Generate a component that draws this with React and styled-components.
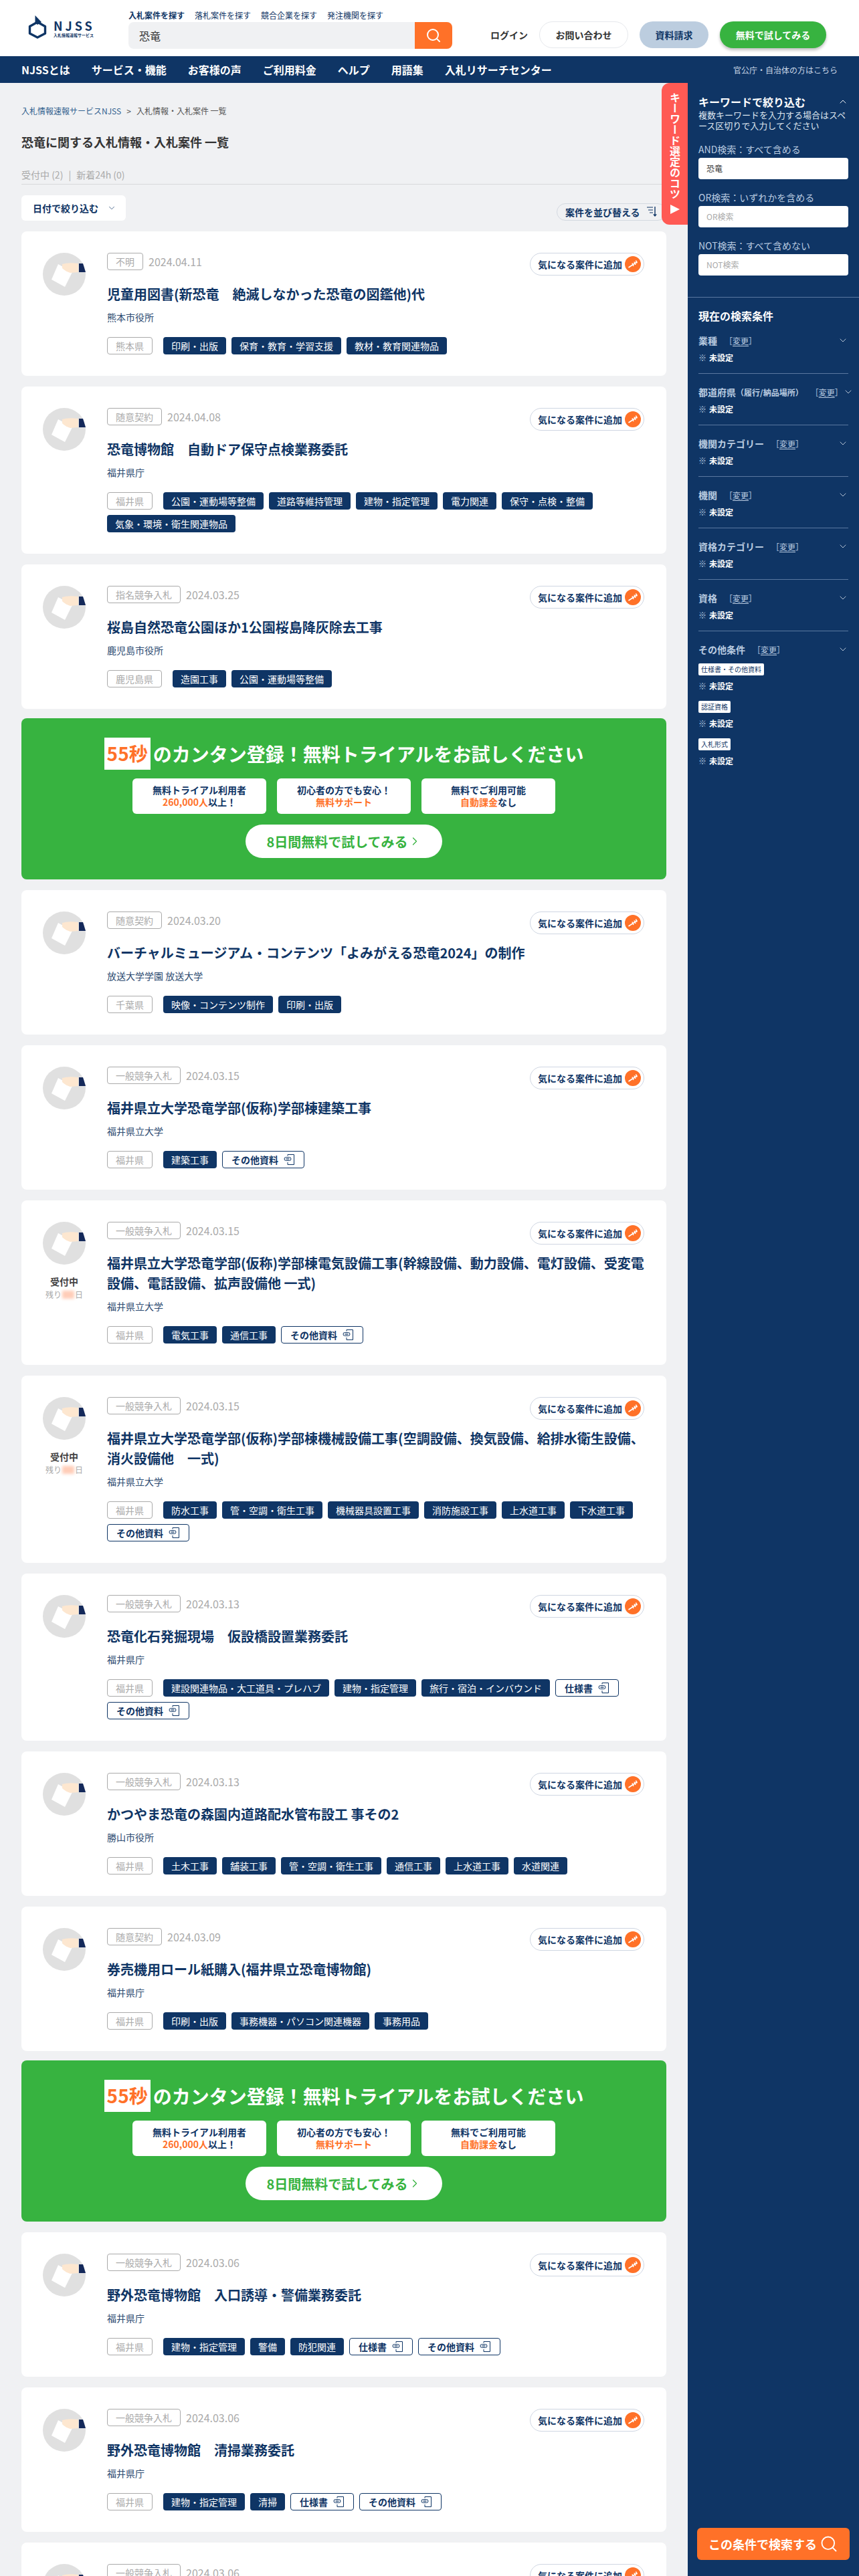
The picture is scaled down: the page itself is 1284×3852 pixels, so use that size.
import React from "react";
import styled, { createGlobalStyle } from "styled-components";
import { ChevronDown, ChevronUp, ChevronRight, Search } from "lucide-react";

const NAVY = "#0f3565";
const ORANGE = "#ff7128";
const GREEN = "#37b340";

const GlobalStyle = createGlobalStyle`
	html, body {
		margin: 0;
		padding: 0;
		background: #f0f1f3;
	}
	body {
		font-family: "Noto Sans CJK JP", "Noto Sans", sans-serif;
		color: #333;
	}
	* {
		box-sizing: border-box;
	}
`;

const Page = styled.div`
	width: 1284px;
	height: 3852px;
	overflow: hidden;
	display: flex;
	flex-direction: column;
`;

/* ヘッダー */
const Header = styled.header`
	height: 84px;
	flex: none;
	background: #fff;
	display: flex;
	align-items: flex-start;
	padding-left: 42px;
`;

const LogoWrap = styled.div`
	width: 150px;
	padding-top: 22px;
	display: flex;
	gap: 10px;
`;

const LogoText = styled.div`
	display: flex;
	flex-direction: column;
	color: ${NAVY};
	padding-top: 7px;
`;

const LogoName = styled.span`
	font-size: 18px;
	line-height: 18px;
	font-weight: 700;
	letter-spacing: 4px;
`;

const LogoSub = styled.span`
	font-size: 6px;
	line-height: 10px;
	font-weight: 700;
	white-space: nowrap;
	margin-top: 1px;
`;

const SearchBlock = styled.div`
	width: 484px;
	padding-top: 12px;
`;

const SearchTabs = styled.div`
	display: flex;
	gap: 15px;
	height: 21px;
	align-items: center;
`;

const SearchTab = styled.span`
	font-size: 12px;
	line-height: 18px;
	color: ${NAVY};
	font-weight: ${(props) => (props.$active ? 700 : 400)};
`;

const SearchBox = styled.div`
	height: 40px;
	background: #f0f1f3;
	border-radius: 8px;
	display: flex;
	justify-content: space-between;
	overflow: hidden;
`;

const SearchValue = styled.span`
	font-size: 16px;
	line-height: 40px;
	padding-left: 16px;
	color: #333;
`;

const SearchButton = styled.span`
	width: 56px;
	background: ${ORANGE};
	color: #fff;
	display: flex;
	align-items: center;
	justify-content: center;
`;

const HeaderActions = styled.div`
	margin-left: 57px;
	padding-top: 32px;
	display: flex;
	align-items: center;
	gap: 17px;
`;

const LoginLink = styled.span`
	font-size: 14px;
	font-weight: 700;
	color: #333;
`;

const PillButton = styled.span`
	height: 40px;
	width: ${(props) => props.$width}px;
	border-radius: 20px;
	font-size: 14px;
	font-weight: 700;
	display: flex;
	align-items: center;
	justify-content: center;
	color: ${(props) => props.$color};
	background: ${(props) => props.$bg};
	border: ${(props) => (props.$outline ? "1px solid #e6e8ec" : "none")};
	box-shadow: ${(props) => (props.$raised ? "0 3px 4px rgba(0, 0, 0, 0.25)" : "none")};
`;

/* グローバルナビ */
const Nav = styled.nav`
	height: 40px;
	flex: none;
	background: ${NAVY};
	display: flex;
	align-items: center;
	justify-content: space-between;
	padding: 0 32px;
`;

const NavList = styled.div`
	display: flex;
	gap: 32px;
`;

const NavItem = styled.span`
	font-size: 16px;
	font-weight: 700;
	color: #fff;
`;

const NavRight = styled.span`
	font-size: 12px;
	color: #c9d6e6;
`;

/* 本体 */
const Body = styled.div`
	flex: 1;
	min-height: 0;
	position: relative;
	display: flex;
`;

const Main = styled.main`
	width: 1028px;
	flex: none;
	padding: 32px 32px 0;
	overflow: hidden;
`;

const Breadcrumb = styled.div`
	font-size: 12px;
	line-height: 20px;
	color: #555;
	display: flex;
	gap: 8px;
`;

const CrumbLink = styled.span`
	color: #33628f;
`;

const PageTitle = styled.h1`
	margin: 22px 0 0;
	font-size: 18px;
	line-height: 28px;
	font-weight: 700;
	color: #333;
`;

const Counts = styled.div`
	margin-top: 23px;
	height: 27px;
	font-size: 14px;
	line-height: 24px;
	color: #aaa;
	border-bottom: 1px solid #d8d9db;
	width: 958px;
	display: flex;
	gap: 8px;
`;

const Toolbar = styled.div`
	margin-top: 16px;
	display: flex;
	justify-content: space-between;
	align-items: flex-end;
	height: 38px;
`;

const FilterButton = styled.div`
	width: 156px;
	height: 38px;
	background: #fff;
	border-radius: 6px;
	padding: 0 14px 0 17px;
	font-size: 14px;
	font-weight: 700;
	color: ${NAVY};
	display: flex;
	align-items: center;
	justify-content: space-between;
`;

const SortButton = styled.div`
	width: 164px;
	height: 26px;
	border: 1px solid #d4d9e0;
	border-radius: 13px;
	padding-left: 12px;
	font-size: 14px;
	font-weight: 700;
	color: ${NAVY};
	display: flex;
	align-items: center;
	gap: 10px;
`;

const Stack = styled.div`
	margin-top: 16px;
	display: flex;
	flex-direction: column;
	gap: 16px;
`;

const Card = styled.article`
	background: #fff;
	border-radius: 8px;
	padding: 32px;
	display: flex;
	gap: 32px;
`;

const Side = styled.div`
	width: 64px;
	flex: none;
	display: flex;
	flex-direction: column;
	align-items: center;
`;

const OpenLabel = styled.span`
	margin-top: 15px;
	font-size: 14px;
	line-height: 20px;
	font-weight: 700;
	color: #444;
	white-space: nowrap;
`;

const Remain = styled.span`
	font-size: 12px;
	line-height: 20px;
	color: #aaa;
	white-space: nowrap;
	display: flex;
	align-items: center;
`;

const BlurDays = styled.i`
	width: 18px;
	height: 12px;
	margin: 0 1px;
	background: #ffcdb8;
	filter: blur(2px);
`;

const CardBody = styled.div`
	flex: 1;
	min-width: 0;
`;

const TopRow = styled.div`
	display: flex;
	align-items: flex-start;
	justify-content: space-between;
	height: 34px;
	margin-right: 1px;
`;

const MetaRow = styled.div`
	display: flex;
	align-items: center;
	gap: 8px;
`;

const OutlineTag = styled.span`
	height: 26px;
	padding: 0 12px;
	border: 1px solid #aaa;
	border-radius: 4px;
	font-size: 14px;
	line-height: 24px;
	color: #aaa;
	white-space: nowrap;
`;

const DateText = styled.span`
	font-size: 16px;
	color: #aaa;
`;

const AddButton = styled.span`
	width: 171px;
	height: 34px;
	border: 1px solid #cfd6e2;
	border-radius: 17px;
	padding: 0 4px 0 11px;
	font-size: 14px;
	font-weight: 700;
	color: ${NAVY};
	display: flex;
	align-items: center;
	justify-content: space-between;
	white-space: nowrap;
`;

const CardTitle = styled.h2`
	margin: 13px 0 0;
	font-size: 20px;
	line-height: 30px;
	font-weight: 700;
	color: ${NAVY};
`;

const Org = styled.p`
	margin: 9px 0 0;
	font-size: 14px;
	line-height: 20px;
	color: #2c4a70;
`;

const Tags = styled.div`
	margin-top: 20px;
	display: flex;
	flex-wrap: wrap;
	gap: 8px;
`;

const PrefTag = styled(OutlineTag)`
	margin-right: 8px;
`;

const SolidTag = styled.span`
	height: 26px;
	padding: 0 12px;
	background: ${NAVY};
	border-radius: 4px;
	font-size: 14px;
	line-height: 26px;
	color: #fff;
	white-space: nowrap;
`;

const DocTag = styled.span`
	height: 26px;
	padding: 0 12px 0 13px;
	background: #fff;
	border: 1px solid ${NAVY};
	border-radius: 4px;
	font-size: 14px;
	font-weight: 700;
	color: ${NAVY};
	white-space: nowrap;
	display: flex;
	align-items: center;
	gap: 8px;
`;

/* キャンペーン枠 */
const Promo = styled.section`
	height: 241px;
	margin-top: -2px;
	background: ${GREEN};
	border-radius: 8px;
	padding-top: 29px;
	display: flex;
	flex-direction: column;
	align-items: center;
`;

const PromoTitle = styled.div`
	height: 48px;
	display: flex;
	align-items: center;
	gap: 4px;
	font-size: 28px;
	font-weight: 700;
	color: #fff;
	white-space: nowrap;
`;

const PromoSeconds = styled.span`
	height: 48px;
	padding: 0 4px;
	background: #fff;
	color: ${ORANGE};
	line-height: 46px;
`;

const PromoBoxes = styled.div`
	margin-top: 13px;
	display: flex;
	gap: 16px;
`;

const PromoBox = styled.div`
	width: 200px;
	height: 53px;
	padding-top: 8px;
	background: #fff;
	border-radius: 6px;
	font-size: 14px;
	line-height: 18px;
	font-weight: 700;
	color: ${NAVY};
	text-align: center;
`;

const Accent = styled.span`
	color: ${ORANGE};
`;

const PromoButton = styled.div`
	margin-top: 16px;
	width: 294px;
	height: 50px;
	background: #fff;
	border-radius: 25px;
	font-size: 20px;
	font-weight: 700;
	color: ${GREEN};
	display: flex;
	align-items: center;
	justify-content: center;
`;

/* サイドバー */
const Sidebar = styled.aside`
	width: 256px;
	flex: none;
	background: ${NAVY};
	display: flex;
	flex-direction: column;
`;

const KeywordPanel = styled.div`
	padding: 18px 16px 32px;
	border-bottom: 1px solid #5a78a0;
`;

const PanelHead = styled.div`
	display: flex;
	justify-content: space-between;
	align-items: center;
	font-size: 16px;
	line-height: 20px;
	font-weight: 700;
	color: #fff;
`;

const PanelNote = styled.p`
	margin: 2px 0 0;
	font-size: 13px;
	line-height: 16px;
	color: #dfe7f0;
`;

const FieldLabel = styled.label`
	display: block;
	margin-top: 17px;
	font-size: 14px;
	line-height: 20px;
	color: #b9cbe0;
`;

const FieldBox = styled.div`
	margin-top: 3px;
	height: 32px;
	background: #fff;
	border-radius: 4px;
	padding-left: 12px;
	font-size: 12px;
	line-height: 32px;
	color: ${(props) => (props.$empty ? "#aaa" : "#333")};
`;

const Conditions = styled.div`
	padding: 17px 16px 0;
`;

const ConditionsTitle = styled.div`
	font-size: 16px;
	line-height: 20px;
	font-weight: 700;
	color: #fff;
	margin-bottom: 17px;
`;

const CondItem = styled.div`
	padding-bottom: 13px;
	margin-bottom: 17px;
	border-bottom: 1px solid #5a78a0;
`;

const CondHead = styled.div`
	height: 20px;
	display: flex;
	align-items: center;
	font-size: 14px;
	font-weight: 700;
	color: #b9cbe0;
	white-space: nowrap;
`;

const CondSmall = styled.span`
	font-size: 12px;
`;

const ChangeLink = styled.span`
	margin-left: 11px;
	font-size: 12px;
	font-weight: 400;
	color: #b9cbe0;
	u {
		text-underline-offset: 2px;
	}
`;

const CondChevron = styled.span`
	margin-left: auto;
	display: flex;
	color: #dfe7f0;
`;

const CondValue = styled.div`
	margin-top: 6px;
	font-size: 12px;
	line-height: 20px;
	font-weight: 700;
	color: #fff;
	display: flex;
	gap: 4px;
`;

const CondMark = styled.span`
	color: #b9cbe0;
	font-weight: 400;
`;

const SubLabel = styled.span`
	display: table;
	margin-top: ${(props) => props.$top}px;
	height: 18px;
	padding: 0 4px;
	background: #fff;
	border-radius: 2px;
	font-size: 10px;
	line-height: 18px;
	color: ${NAVY};
`;

const SubmitButton = styled.div`
	margin: auto 14px 24px;
	height: 48px;
	background: ${ORANGE};
	border-radius: 6px;
	font-size: 18px;
	font-weight: 700;
	color: #fff;
	display: flex;
	align-items: center;
	justify-content: center;
	gap: 4px;
`;

const TipsTab = styled.div`
	position: absolute;
	top: 0;
	left: 989px;
	width: 39px;
	height: 212px;
	padding: 14px 0 0;
	background: #ff5a54;
	border-radius: 12px 0 0 12px;
	writing-mode: vertical-rl;
	display: flex;
	align-items: center;
	font-size: 16px;
	line-height: 39px;
	font-weight: 700;
	color: #fff;
	white-space: nowrap;
`;

const TipsArrow = styled.svg`
	margin-top: 8px;
`;

const cards = [
	{ kind: "不明", date: "2024.04.11", title: "児童用図書(新恐竜　絶滅しなかった恐竜の図鑑他)代", org: "熊本市役所", pref: "熊本県", tags: ["印刷・出版", "保育・教育・学習支援", "教材・教育関連物品"] },
	{ kind: "随意契約", date: "2024.04.08", title: "恐竜博物館　自動ドア保守点検業務委託", org: "福井県庁", pref: "福井県", tags: ["公園・運動場等整備", "道路等維持管理", "建物・指定管理", "電力関連", "保守・点検・整備", "気象・環境・衛生関連物品"] },
	{ kind: "指名競争入札", date: "2024.03.25", title: "桜島自然恐竜公園ほか1公園桜島降灰除去工事", org: "鹿児島市役所", pref: "鹿児島県", tags: ["造園工事", "公園・運動場等整備"] },
	"promo",
	{ kind: "随意契約", date: "2024.03.20", title: "バーチャルミュージアム・コンテンツ「よみがえる恐竜2024」の制作", org: "放送大学学園 放送大学", pref: "千葉県", tags: ["映像・コンテンツ制作", "印刷・出版"] },
	{ kind: "一般競争入札", date: "2024.03.15", title: "福井県立大学恐竜学部(仮称)学部棟建築工事", org: "福井県立大学", pref: "福井県", tags: ["建築工事"], docs: ["その他資料"] },
	{ kind: "一般競争入札", date: "2024.03.15", open: true, title: "福井県立大学恐竜学部(仮称)学部棟電気設備工事(幹線設備、動力設備、電灯設備、受変電設備、電話設備、拡声設備他 一式)", org: "福井県立大学", pref: "福井県", tags: ["電気工事", "通信工事"], docs: ["その他資料"] },
	{ kind: "一般競争入札", date: "2024.03.15", open: true, title: "福井県立大学恐竜学部(仮称)学部棟機械設備工事(空調設備、換気設備、給排水衛生設備、消火設備他　一式)", org: "福井県立大学", pref: "福井県", tags: ["防水工事", "管・空調・衛生工事", "機械器具設置工事", "消防施設工事", "上水道工事", "下水道工事"], docs: ["その他資料"] },
	{ kind: "一般競争入札", date: "2024.03.13", title: "恐竜化石発掘現場　仮設橋設置業務委託", org: "福井県庁", pref: "福井県", tags: ["建設関連物品・大工道具・プレハブ", "建物・指定管理", "旅行・宿泊・インバウンド"], docs: ["仕様書", "その他資料"] },
	{ kind: "一般競争入札", date: "2024.03.13", title: "かつやま恐竜の森園内道路配水管布設工 事その2", org: "勝山市役所", pref: "福井県", tags: ["土木工事", "舗装工事", "管・空調・衛生工事", "通信工事", "上水道工事", "水道関連"] },
	{ kind: "随意契約", date: "2024.03.09", title: "券売機用ロール紙購入(福井県立恐竜博物館)", org: "福井県庁", pref: "福井県", tags: ["印刷・出版", "事務機器・パソコン関連機器", "事務用品"] },
	"promo",
	{ kind: "一般競争入札", date: "2024.03.06", title: "野外恐竜博物館　入口誘導・警備業務委託", org: "福井県庁", pref: "福井県", tags: ["建物・指定管理", "警備", "防犯関連"], docs: ["仕様書", "その他資料"] },
	{ kind: "一般競争入札", date: "2024.03.06", title: "野外恐竜博物館　清掃業務委託", org: "福井県庁", pref: "福井県", tags: ["建物・指定管理", "清掃"], docs: ["仕様書", "その他資料"] },
	{ kind: "一般競争入札", date: "2024.03.06", title: "野外恐竜博物館", org: "福井県庁", pref: "福井県", tags: ["建物・指定管理"] },
];

const conditions = [
	{ label: "業種" },
	{ label: "都道府県", small: "（履行/納品場所）" },
	{ label: "機関カテゴリー" },
	{ label: "機関" },
	{ label: "資格カテゴリー" },
	{ label: "資格" },
];

function Logo() {
	return (
		<svg width="28" height="36" viewBox="0 0 28 36">
			<path d="M14 11 L25.5 17.5 V28 L14 34 L2.5 28 V17.5 Z" fill="none" stroke={NAVY} strokeWidth="3.4" strokeLinejoin="round" />
			<path d="M10.5 1 L20 11 L14 15 L10.5 12 Z" fill={NAVY} />
		</svg>
	);
}

function BidIllustration() {
	return (
		<svg width="64" height="64" viewBox="0 0 64 64">
			<circle cx="32" cy="32" r="32" fill="#e0e0e0" />
			<polygon points="23,17 44,29 33,51 13,40" fill="#fff" />
			<path d="M29 17 Q38 14 53 16 V29 L41 30 Q34 28 29 23 Z" fill="#fde7d0" />
			<path d="M54 16 H60 L64 29 H54 Z" fill="#14295a" />
		</svg>
	);
}

function PinIcon() {
	return (
		<svg width="24" height="24" viewBox="0 0 24 24">
			<circle cx="12" cy="12" r="12" fill={ORANGE} />
			<path d="M5.5 17 L18.5 8.5" stroke="#fff" strokeWidth="1.6" />
			<path d="M11 10.5 L13 15 M14 8.5 L16 13 M16.5 6.5 L18 10.5" stroke="#fff" strokeWidth="1.6" />
		</svg>
	);
}

function DocIcon() {
	return (
		<svg width="18" height="18" viewBox="0 0 18 18" fill="none" stroke={NAVY} strokeWidth="1">
			<path d="M6 3.5 V1.5 H15.5 V16.5 H6 V13" />
			<rect x="1" y="5.5" width="10" height="5" rx="2.5" fill="#fff" />
			<path d="M3.5 8 H8.5" strokeWidth="1.4" />
		</svg>
	);
}

function SortIcon() {
	return (
		<svg width="16" height="18" viewBox="0 0 16 18" fill="none" stroke={NAVY} strokeWidth="1">
			<path d="M0 2 H9 M2 6 H9 M4 10 H9" />
			<path d="M12 1 V15" strokeWidth="1.4" />
			<path d="M9 12.5 L12 16 L15 12.5 Z" fill={NAVY} stroke="none" />
		</svg>
	);
}

function BidCard({ item }) {
	return (
		<Card>
			<Side>
				<BidIllustration />
				{item.open && (
					<>
						<OpenLabel>受付中</OpenLabel>
						<Remain>
							残り<BlurDays />日
						</Remain>
					</>
				)}
			</Side>
			<CardBody>
				<TopRow>
					<MetaRow>
						<OutlineTag>{item.kind}</OutlineTag>
						<DateText>{item.date}</DateText>
					</MetaRow>
					<AddButton>
						気になる案件に追加
						<PinIcon />
					</AddButton>
				</TopRow>
				<CardTitle>{item.title}</CardTitle>
				<Org>{item.org}</Org>
				<Tags>
					<PrefTag>{item.pref}</PrefTag>
					{item.tags.map((tag) => (
						<SolidTag key={tag}>{tag}</SolidTag>
					))}
					{(item.docs || []).map((doc) => (
						<DocTag key={doc}>
							{doc}
							<DocIcon />
						</DocTag>
					))}
				</Tags>
			</CardBody>
		</Card>
	);
}

function TrialPromo() {
	return (
		<Promo>
			<PromoTitle>
				<PromoSeconds>55秒</PromoSeconds>
				のカンタン登録！無料トライアルをお試しください
			</PromoTitle>
			<PromoBoxes>
				<PromoBox>
					無料トライアル利用者
					<br />
					<Accent>260,000人</Accent>以上！
				</PromoBox>
				<PromoBox>
					初心者の方でも安心！
					<br />
					<Accent>無料サポート</Accent>
				</PromoBox>
				<PromoBox>
					無料でご利用可能
					<br />
					<Accent>自動課金</Accent>なし
				</PromoBox>
			</PromoBoxes>
			<PromoButton>
				8日間無料で試してみる
				<ChevronRight size={20} strokeWidth={1.5} />
			</PromoButton>
		</Promo>
	);
}

function Condition({ item }) {
	return (
		<CondItem>
			<CondHead>
				{item.label}
				{item.small && <CondSmall>{item.small}</CondSmall>}
				<ChangeLink>
					［<u>変更</u>］
				</ChangeLink>
				<CondChevron>
					<ChevronDown size={16} strokeWidth={1.2} />
				</CondChevron>
			</CondHead>
			<CondValue>
				<CondMark>※</CondMark>未設定
			</CondValue>
		</CondItem>
	);
}

function SubCondition({ label, top }) {
	return (
		<>
			<SubLabel $top={top}>{label}</SubLabel>
			<CondValue>
				<CondMark>※</CondMark>未設定
			</CondValue>
		</>
	);
}

export default function App() {
	return (
		<Page>
			<GlobalStyle />
			<Header>
				<LogoWrap>
					<Logo />
					<LogoText>
						<LogoName>NJSS</LogoName>
						<LogoSub>入札情報速報サービス</LogoSub>
					</LogoText>
				</LogoWrap>
				<SearchBlock>
					<SearchTabs>
						<SearchTab $active>入札案件を探す</SearchTab>
						<SearchTab>落札案件を探す</SearchTab>
						<SearchTab>競合企業を探す</SearchTab>
						<SearchTab>発注機関を探す</SearchTab>
					</SearchTabs>
					<SearchBox>
						<SearchValue>恐竜</SearchValue>
						<SearchButton>
							<Search size={24} strokeWidth={2} />
						</SearchButton>
					</SearchBox>
				</SearchBlock>
				<HeaderActions>
					<LoginLink>ログイン</LoginLink>
					<PillButton $width={133} $color="#333" $bg="#fff" $outline>
						お問い合わせ
					</PillButton>
					<PillButton $width={103} $color={NAVY} $bg="#bccddf">
						資料請求
					</PillButton>
					<PillButton $width={159} $color="#fff" $bg={GREEN} $raised>
						無料で試してみる
					</PillButton>
				</HeaderActions>
			</Header>
			<Nav>
				<NavList>
					<NavItem>NJSSとは</NavItem>
					<NavItem>サービス・機能</NavItem>
					<NavItem>お客様の声</NavItem>
					<NavItem>ご利用料金</NavItem>
					<NavItem>ヘルプ</NavItem>
					<NavItem>用語集</NavItem>
					<NavItem>入札リサーチセンター</NavItem>
				</NavList>
				<NavRight>官公庁・自治体の方はこちら</NavRight>
			</Nav>
			<Body>
				<Main>
					<Breadcrumb>
						<CrumbLink>入札情報速報サービスNJSS</CrumbLink>
						<span>&gt;</span>
						<span>入札情報・入札案件 一覧</span>
					</Breadcrumb>
					<PageTitle>恐竜に関する入札情報・入札案件 一覧</PageTitle>
					<Counts>
						<span>受付中 (2)</span>
						<span>|</span>
						<span>新着24h (0)</span>
					</Counts>
					<Toolbar>
						<FilterButton>
							日付で絞り込む
							<ChevronDown size={14} strokeWidth={1.2} />
						</FilterButton>
						<SortButton>
							案件を並び替える
							<SortIcon />
						</SortButton>
					</Toolbar>
					<Stack>
						{cards.map((item, index) => (item === "promo" ? <TrialPromo key={index} /> : <BidCard key={index} item={item} />))}
					</Stack>
				</Main>
				<TipsTab>
					キーワード選定のコツ
					<TipsArrow width="14" height="14" viewBox="0 0 14 14">
						<polygon points="0,0 14,7 0,14" fill="#fff" />
					</TipsArrow>
				</TipsTab>
				<Sidebar>
					<KeywordPanel>
						<PanelHead>
							キーワードで絞り込む
							<ChevronUp size={16} strokeWidth={1.4} />
						</PanelHead>
						<PanelNote>複数キーワードを入力する場合はスペース区切りで入力してください</PanelNote>
						<FieldLabel>AND検索：すべて含める</FieldLabel>
						<FieldBox>恐竜</FieldBox>
						<FieldLabel>OR検索：いずれかを含める</FieldLabel>
						<FieldBox $empty>OR検索</FieldBox>
						<FieldLabel>NOT検索：すべて含めない</FieldLabel>
						<FieldBox $empty>NOT検索</FieldBox>
					</KeywordPanel>
					<Conditions>
						<ConditionsTitle>現在の検索条件</ConditionsTitle>
						{conditions.map((item) => (
							<Condition key={item.label} item={item} />
						))}
						<CondHead>
							その他条件
							<ChangeLink>
								［<u>変更</u>］
							</ChangeLink>
							<CondChevron>
								<ChevronDown size={16} strokeWidth={1.2} />
							</CondChevron>
						</CondHead>
						<SubCondition label="仕様書・その他資料" top={11} />
						<SubCondition label="認証資格" top={12} />
						<SubCondition label="入札形式" top={12} />
					</Conditions>
					<SubmitButton>
						この条件で検索する
						<Search size={28} strokeWidth={1.6} />
					</SubmitButton>
				</Sidebar>
			</Body>
		</Page>
	);
}
